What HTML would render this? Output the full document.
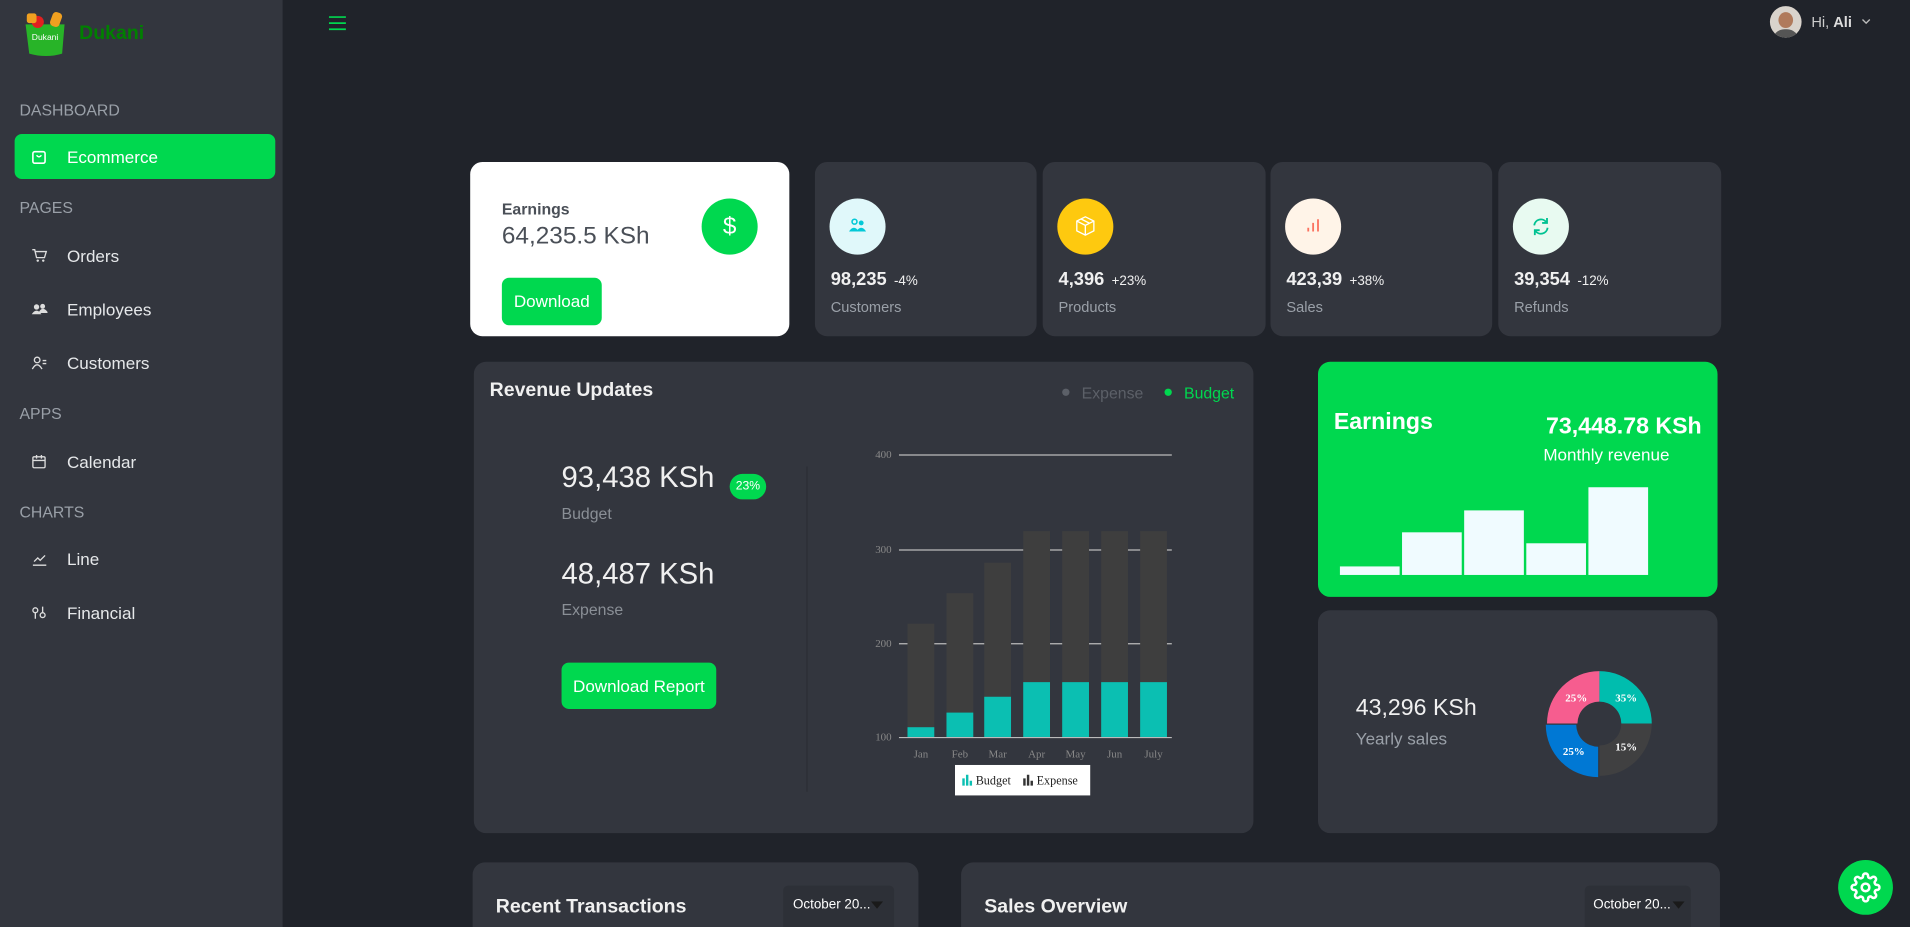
<!DOCTYPE html>
<html><head><meta charset="utf-8">
<style>
html,body{margin:0;padding:0;width:1910px;height:927px;overflow:hidden;background:#20232a;}
#clip{position:absolute;left:0;top:0;width:1910px;height:927px;overflow:hidden;}
#w{position:absolute;left:0;top:0;width:1568px;height:761px;overflow:hidden;transform:scale(1.21811);transform-origin:0 0;font-family:"Liberation Sans",sans-serif;color:#e6e8ea;}
.a{position:absolute;}
.side{left:0;top:0;width:232px;height:761px;background:#33363e;}
.sec{font-size:13px;color:#9aa0a8;left:16px;}
.nav{left:55px;font-size:14px;color:#e6e8ea;}
.card{background:#33363e;border-radius:10px;}
.stat .num{position:absolute;left:13px;top:88px;font-size:15px;font-weight:bold;color:#f0f0f0}
.stat .num span{font-size:11px;font-weight:normal;margin-left:6px}
.stat .lbl{position:absolute;left:13px;top:112px;font-size:12px;color:#9aa0a8}
.stat .c{position:absolute;left:12px;top:30px;width:46px;height:46px;border-radius:50%;}
.btn{background:#00d84f;border-radius:6px;color:#fff;font-size:14px;text-align:center;}
</style></head><body><div id="clip"><div id="w">
<div class="a side"></div>
<svg class="a" style="left:18px;top:8px" width="40" height="40" viewBox="0 0 40 40">
<path d="M3 12 L35 12 L33 36 Q20 40 6 36 Z" fill="#28b428"/>
<circle cx="13" cy="10" r="5" fill="#e02020"/><rect x="24" y="2" width="8" height="12" rx="3" fill="#f0a020" transform="rotate(20 28 8)"/>
<rect x="4" y="3" width="8" height="8" rx="2" fill="#f0a020"/>
<text x="19" y="25" font-size="7" fill="#fff" text-anchor="middle" font-family="Liberation Sans">Dukani</text>
</svg>
<div class="a" style="left:65px;top:19px;font-size:16px;font-weight:bold;color:#008000">Dukani</div>
<div class="a sec" style="top:83px">DASHBOARD</div>
<div class="a" style="left:12px;top:110px;width:214px;height:37px;background:#00d84f;border-radius:6px"></div>
<svg class="a" style="left:26px;top:123px" width="12" height="12" viewBox="0 0 12 12"><rect x="1" y="1.5" width="10" height="9.5" rx="1.5" fill="none" stroke="#fff" stroke-width="1.3"/><path d="M4 4.5 Q6 7 8 4.5" fill="none" stroke="#fff" stroke-width="1.2"/></svg>
<div class="a nav" style="top:121px;color:#fff">Ecommerce</div>
<div class="a sec" style="top:163px">PAGES</div>
<svg class="a" style="left:26px;top:204px" width="13" height="12" viewBox="0 0 13 12"><path d="M0.5 1h2l1.5 6.5h6.5l1.5-5H3.3" fill="none" stroke="#ddd" stroke-width="1.1"/><circle cx="5" cy="10" r="1" fill="#ddd"/><circle cx="9.5" cy="10" r="1" fill="#ddd"/></svg>
<div class="a nav" style="top:202px">Orders</div>
<svg class="a" style="left:26px;top:248px" width="13" height="12" viewBox="0 0 13 12"><circle cx="4" cy="4" r="2.2" fill="#ddd"/><circle cx="9" cy="3.5" r="2" fill="#ddd"/><path d="M0 10q4-6 8 0zM6 8q3-5 7 0v1H7z" fill="#ddd"/></svg>
<div class="a nav" style="top:246px">Employees</div>
<svg class="a" style="left:26px;top:292px" width="13" height="12" viewBox="0 0 13 12"><circle cx="4.5" cy="3.5" r="2.3" fill="none" stroke="#ddd" stroke-width="1.1"/><path d="M0.5 11q4-7 8 0" fill="none" stroke="#ddd" stroke-width="1.1"/><path d="M9 4h3M9 6.5h3" stroke="#ddd" stroke-width="1.1"/></svg>
<div class="a nav" style="top:290px">Customers</div>
<div class="a sec" style="top:332px">APPS</div>
<svg class="a" style="left:26px;top:373px" width="12" height="12" viewBox="0 0 12 12"><rect x="1" y="2" width="10" height="9" rx="1" fill="none" stroke="#ddd" stroke-width="1.1"/><path d="M1 5h10M4 0.5v3M8 0.5v3" stroke="#ddd" stroke-width="1.1"/></svg>
<div class="a nav" style="top:371px">Calendar</div>
<div class="a sec" style="top:413px">CHARTS</div>
<svg class="a" style="left:26px;top:453px" width="13" height="12" viewBox="0 0 13 12"><path d="M1 11h11M2 8l3-3 2 2 4-4" fill="none" stroke="#ddd" stroke-width="1.1"/></svg>
<div class="a nav" style="top:451px">Line</div>
<svg class="a" style="left:26px;top:497px" width="13" height="12" viewBox="0 0 13 12"><circle cx="3" cy="4" r="2" fill="none" stroke="#ddd" stroke-width="1.1"/><circle cx="9" cy="8" r="2" fill="none" stroke="#ddd" stroke-width="1.1"/><path d="M3 6v5M9 1v5" stroke="#ddd" stroke-width="1.1"/></svg>
<div class="a nav" style="top:495px">Financial</div>

<svg class="a" style="left:270px;top:13px" width="14" height="12"><path d="M0 1h14M0 6h14M0 11h14" stroke="#00d84f" stroke-width="1.4"/></svg>
<div class="a" style="left:1453px;top:5px;width:26px;height:26px;border-radius:50%;background:#d9d3cc;overflow:hidden"><div style="margin:5px auto 0;width:12px;height:13px;border-radius:50%;background:#b07a5c"></div><div style="margin:1px auto 0;width:22px;height:10px;border-radius:10px 10px 0 0;background:#555"></div></div>
<div class="a" style="left:1487px;top:11px;font-size:12px;color:#ccc">Hi, <b style="color:#ddd">Ali</b></div>
<svg class="a" style="left:1528px;top:15px" width="8" height="6"><path d="M1 1l3 3 3-3" fill="none" stroke="#bbb" stroke-width="1.1"/></svg>

<div class="a" style="left:386px;top:133px;width:262px;height:143px;background:#fff;border-radius:10px"></div>
<div class="a" style="left:412px;top:164px;font-size:13px;font-weight:bold;color:#4a4f57">Earnings</div>
<div class="a" style="left:412px;top:183px;font-size:20px;color:#4a4f57">64,235.5 KSh</div>
<div class="a" style="left:576px;top:163px;width:46px;height:46px;border-radius:50%;background:#00d84f;color:#fff;font-size:20px;text-align:center;line-height:46px">$</div>
<div class="a btn" style="left:412px;top:228px;width:82px;height:39px;line-height:39px">Download</div>

<div class="a card stat" style="left:669px;top:133px;width:182px;height:143px"><div class="c" style="background:#e0f8fa"></div>
<svg class="a" style="left:28px;top:46px" width="14" height="12" viewBox="0 0 14 12"><circle cx="4.5" cy="3" r="2" fill="none" stroke="#03c9d7" stroke-width="1.3"/><circle cx="10" cy="4" r="2" fill="#03c9d7"/><path d="M0 11q4-6 8 0zM6 11q4-6 8 0z" fill="#03c9d7"/></svg>
<div class="num">98,235<span>-4%</span></div><div class="lbl">Customers</div></div>
<div class="a card stat" style="left:856px;top:133px;width:183px;height:143px"><div class="c" style="background:#fec90f"></div>
<svg class="a" style="left:27px;top:44px" width="16" height="17" viewBox="0 0 16 17"><path d="M8 1l7 3.5v8L8 16 1 12.5v-8zM1 4.5L8 8l7-3.5M8 8v8M4.5 2.8l7 3.5" fill="none" stroke="#fff" stroke-width="1.1"/></svg>
<div class="num">4,396<span>+23%</span></div><div class="lbl">Products</div></div>
<div class="a card stat" style="left:1043px;top:133px;width:182px;height:143px"><div class="c" style="background:#fff4e8"></div>
<svg class="a" style="left:29px;top:46px" width="12" height="12"><path d="M2 11V8M6 11V4M10 11V1" stroke="#fb7360" stroke-width="1.5"/></svg>
<div class="num">423,39<span>+38%</span></div><div class="lbl">Sales</div></div>
<div class="a card stat" style="left:1230px;top:133px;width:183px;height:143px"><div class="c" style="background:#e8faf1"></div>
<svg class="a" style="left:27px;top:45px" width="16" height="16" viewBox="0 0 16 16"><path d="M2.5 7A5.5 5.5 0 0 1 12.5 4.5M13.5 9A5.5 5.5 0 0 1 3.5 11.5" fill="none" stroke="#00c292" stroke-width="1.5"/><path d="M13 1v4h-4M3 15v-4h4" fill="none" stroke="#00c292" stroke-width="1.5"/></svg>
<div class="num">39,354<span>-12%</span></div><div class="lbl">Refunds</div></div>

<div class="a card" style="left:389px;top:297px;width:640px;height:387px"></div>
<div class="a" style="left:402px;top:312px;font-size:16px;font-weight:bold;color:#f0f0f0">Revenue Updates</div>
<div class="a" style="left:872px;top:315px;font-size:13px;color:#5c6068"><span style="display:inline-block;width:6px;height:6px;border-radius:50%;background:#5c6068;margin-right:10px;vertical-align:2px"></span>Expense</div>
<div class="a" style="left:956px;top:315px;font-size:13px;color:#00d84f"><span style="display:inline-block;width:6px;height:6px;border-radius:50%;background:#00d84f;margin-right:10px;vertical-align:2px"></span>Budget</div>
<div class="a" style="left:461px;top:379px;font-size:24px;color:#f0f0f0">93,438 KSh</div>
<div class="a" style="left:599px;top:389px;width:30px;height:21px;border-radius:11px;background:#00d84f;color:#fff;font-size:10px;text-align:center;line-height:21px">23%</div>
<div class="a" style="left:461px;top:414px;font-size:13px;color:#8a8f96">Budget</div>
<div class="a" style="left:461px;top:458px;font-size:24px;color:#f0f0f0">48,487 KSh</div>
<div class="a" style="left:461px;top:493px;font-size:13px;color:#8a8f96">Expense</div>
<div class="a btn" style="left:461px;top:544px;width:127px;height:38px;line-height:38px">Download Report</div>
<div class="a" style="left:662px;top:383px;width:1px;height:267px;background:#2b2e35"></div>
<svg class="a" style="left:700px;top:360px" width="270" height="300">
<g stroke="#bbb" stroke-width="1"><path d="M38 13.5H262M38 91.5H262M38 168.5H262M38 245.5H262"/></g>
<g fill="#888" font-family="Liberation Serif" font-size="9" text-anchor="end"><text x="32" y="16">400</text><text x="32" y="94">300</text><text x="32" y="171">200</text><text x="32" y="248">100</text></g>
<g fill="#3e3e3e"><rect x="45" y="152" width="22" height="93"/><rect x="77" y="127" width="22" height="118"/><rect x="108" y="102" width="22" height="143"/><rect x="140" y="76" width="22" height="169"/><rect x="172" y="76" width="22" height="169"/><rect x="204" y="76" width="22" height="169"/><rect x="236" y="76" width="22" height="169"/></g>
<g fill="#0bbfb2"><rect x="45" y="237" width="22" height="8"/><rect x="77" y="225" width="22" height="20"/><rect x="108" y="212" width="22" height="33"/><rect x="140" y="200" width="22" height="45"/><rect x="172" y="200" width="22" height="45"/><rect x="204" y="200" width="22" height="45"/><rect x="236" y="200" width="22" height="45"/></g>
<g fill="#888" font-family="Liberation Serif" font-size="9" text-anchor="middle"><text x="56" y="262">Jan</text><text x="88" y="262">Feb</text><text x="119" y="262">Mar</text><text x="151" y="262">Apr</text><text x="183" y="262">May</text><text x="215" y="262">Jun</text><text x="247" y="262">July</text></g>
<rect x="84" y="268" width="111" height="25" fill="#fff"/>
<path d="M90 285v-6h2v6zM93 285v-9h2v9zM96 285v-4h2v4z" fill="#0bbfb2"/>
<path d="M140 285v-6h2v6zM143 285v-9h2v9zM146 285v-4h2v4z" fill="#333"/>
<g font-family="Liberation Serif" font-size="10" fill="#222"><text x="101" y="284">Budget</text><text x="151" y="284">Expense</text></g>
</svg>

<div class="a" style="left:1082px;top:297px;width:328px;height:193px;background:#00d84f;border-radius:10px"></div>
<div class="a" style="left:1095px;top:336px;font-size:19px;color:#fff;font-weight:bold">Earnings</div>
<div class="a" style="left:1230px;top:340px;width:167px;text-align:right;font-size:19px;color:#fff;font-weight:bold">73,448.78 KSh</div>
<div class="a" style="left:1267px;top:365px;font-size:14px;color:#fff">Monthly revenue</div>
<svg class="a" style="left:1082px;top:390px" width="328" height="90" fill="#f0fbff">
<rect x="18" y="75" width="49" height="7"/><rect x="69" y="47" width="49" height="35"/><rect x="120" y="29" width="49" height="53"/><rect x="171" y="56" width="49" height="26"/><rect x="222" y="10" width="49" height="72"/></svg>

<div class="a card" style="left:1082px;top:501px;width:328px;height:183px"></div>
<div class="a" style="left:1113px;top:571px;font-size:19px;color:#f0f0f0">43,296 KSh</div>
<div class="a" style="left:1113px;top:598px;font-size:14px;color:#9aa0a8">Yearly sales</div>
<svg class="a" style="left:1263px;top:544px" width="100" height="100" viewBox="-50 -50 100 100">
<path d="M0-43A43 43 0 0 1 43 0H18A18 18 0 0 0 0-18Z" fill="#00bdae"/>
<path d="M43 0A43 43 0 0 1 0 43V18A18 18 0 0 0 18 0Z" fill="#404041"/>
<path d="M-1 44A43 43 0 0 1 -44 1H-19A18 18 0 0 0 -1 19Z" fill="#0078d4"/>
<path d="M-43 0A43 43 0 0 1 0-43V-18A18 18 0 0 0 -18 0Z" fill="#f65d8f"/>
<g font-family="Liberation Serif" font-size="9" font-weight="bold" fill="#fff" text-anchor="middle"><text x="-19" y="-18">25%</text><text x="22" y="-18">35%</text><text x="-21" y="26">25%</text><text x="22" y="22">15%</text></g>
</svg>

<div class="a card" style="left:388px;top:708px;width:366px;height:80px"></div>
<div class="a" style="left:407px;top:736px;font-size:16px;font-weight:bold;color:#f0f0f0">Recent Transactions</div>
<div class="a" style="left:643px;top:727px;width:91px;height:40px;border-radius:4px;background:#2d3037;font-size:11px;color:#fff"><span style="position:absolute;left:8px;top:10px">October 20...</span><svg style="position:absolute;left:72px;top:13px" width="10" height="6"><path d="M0 0h10L5 6z" fill="#1a1a1a"/></svg></div>
<div class="a card" style="left:789px;top:708px;width:623px;height:80px"></div>
<div class="a" style="left:808px;top:736px;font-size:16px;font-weight:bold;color:#f0f0f0">Sales Overview</div>
<div class="a" style="left:1301px;top:727px;width:87px;height:40px;border-radius:4px;background:#2d3037;font-size:11px;color:#fff"><span style="position:absolute;left:7px;top:10px">October 20...</span><svg style="position:absolute;left:72px;top:13px" width="10" height="6"><path d="M0 0h10L5 6z" fill="#1a1a1a"/></svg></div>

<div class="a" style="left:1509px;top:706px;width:45px;height:45px;border-radius:50%;background:#00d84f"></div>
<svg class="a" style="left:1519px;top:716px" width="25" height="25" viewBox="0 0 24 24"><circle cx="12" cy="12" r="3" fill="none" stroke="#fff" stroke-width="2"/><path d="M19.4 15a1.65 1.65 0 0 0 .33 1.820l.06.06a2 2 0 1 1-2.83 2.83l-.06-.06a1.65 1.65 0 0 0-1.82-.33 1.65 1.65 0 0 0-1 1.51V21a2 2 0 1 1-4 0v-.09A1.65 1.65 0 0 0 9 19.4a1.65 1.65 0 0 0-1.82.33l-.06.06a2 2 0 1 1-2.830-2.83l.06-.06A1.65 1.65 0 0 0 4.68 15a1.65 1.65 0 0 0-1.51-1H3a2 2 0 1 1 0-4h.09A1.65 1.65 0 0 0 4.6 9a1.65 1.65 0 0 0-.33-1.82l-.06-.06a2 2 0 1 1 2.83-2.83l.06.06A1.65 1.65 0 0 0 9 4.68a1.65 1.65 0 0 0 1-1.51V3a2 2 0 1 1 4 0v.09a1.65 1.65 0 0 0 1 1.51 1.65 1.65 0 0 0 1.82-.33l.06-.06a2 2 0 1 1 2.83 2.83l-.06.06A1.65 1.65 0 0 0 19.4 9a1.65 1.65 0 0 0 1.51 1H21a2 2 0 1 1 0 4h-.09a1.65 1.65 0 0 0-1.51 1z" fill="none" stroke="#fff" stroke-width="2"/></svg>
</div></div></body></html>
